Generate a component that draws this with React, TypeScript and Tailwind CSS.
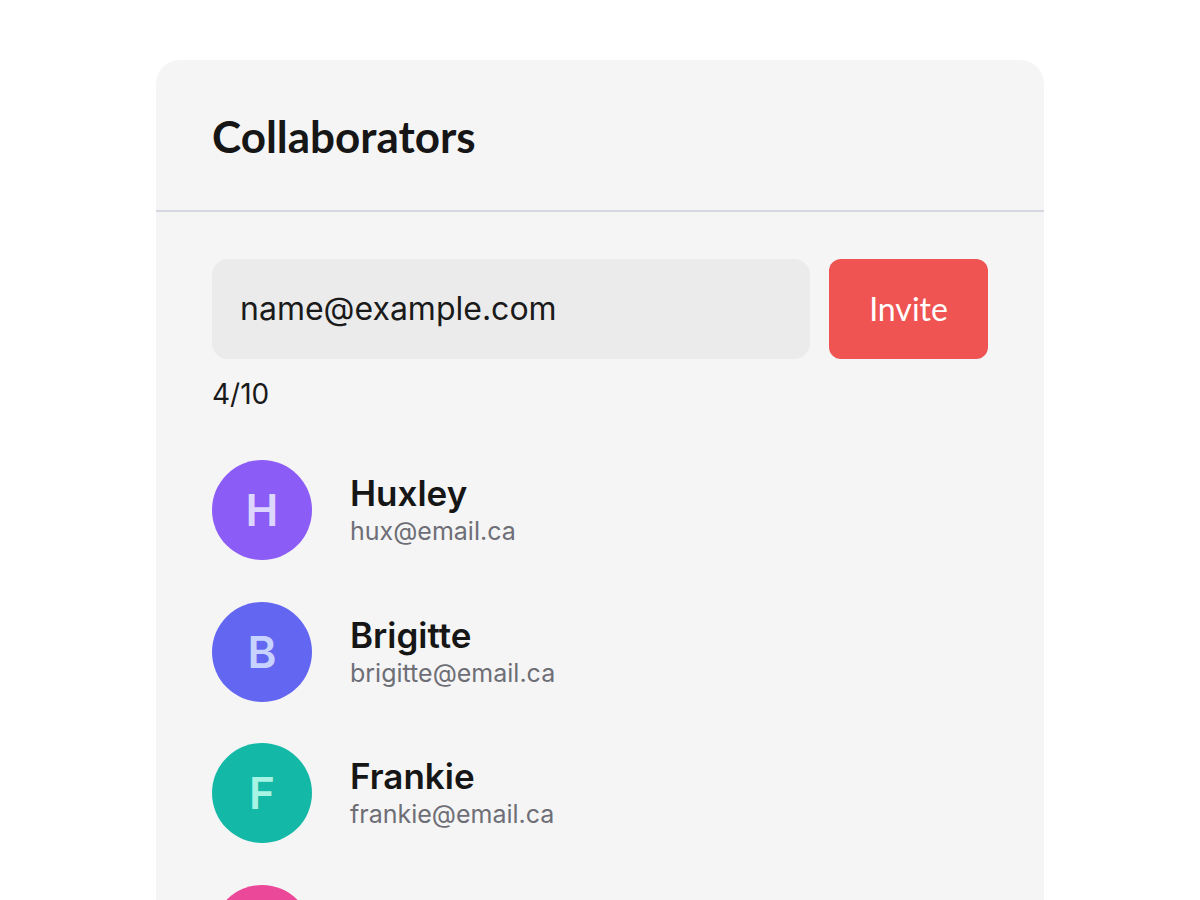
const people = [
  { name: "Huxley", email: "hux@email.ca", initial: "H", bg: "bg-[#8b5cf6]", fg: "text-[#ddd6fe]" },
  { name: "Brigitte", email: "brigitte@email.ca", initial: "B", bg: "bg-[#6366f1]", fg: "text-[#c7d2fe]" },
  { name: "Frankie", email: "frankie@email.ca", initial: "F", bg: "bg-[#14b8a6]", fg: "text-[#a7f3e4]" },
  { name: "Jordan", email: "jordan@email.ca", initial: "J", bg: "bg-[#ec4899]", fg: "text-[#fbcfe8]" },
];

export default function App() {
  return (
    <div className="h-[900px] overflow-hidden bg-white pt-[60px] font-['Inter',sans-serif]">
      <div className="mx-auto w-[888px] rounded-t-[24px] bg-[#f5f5f5]">
        <div className="border-b-2 border-[#d6d8e1] px-14 pb-[48px] pt-[50px]">
          <h1 className="font-['Lato',sans-serif] text-[44px] font-bold leading-[52px] text-[#161616]">
            Collaborators
          </h1>
        </div>

        <div className="px-14 pt-[47px]">
          <div className="flex gap-[19px]">
            <div className="flex h-[100px] flex-1 items-center rounded-2xl bg-[#ebebeb] px-7">
              <span className="text-[32px] text-[#1a1a1a]">name@example.com</span>
            </div>
            <button
              type="button"
              className="h-[100px] w-[159px] rounded-xl bg-[#ef5453] font-['Lato',sans-serif] text-[32px] text-white"
            >
              Invite
            </button>
          </div>
          <div className="mt-[19px] text-[28px] leading-[32px] text-[#1a1a1a]">4/10</div>

          <div className="mt-[50px] flex flex-col gap-[41.5px]">
            {people.map((p) => (
              <div key={p.name} className="flex items-center gap-[38px]">
                <div
                  className={`flex h-[100px] w-[100px] shrink-0 items-center justify-center rounded-full ${p.bg}`}
                >
                  <span className={`text-[44px] font-semibold ${p.fg}`}>{p.initial}</span>
                </div>
                <div className="flex flex-col">
                  <span className="text-[35px] font-semibold leading-[42px] text-[#161616]">{p.name}</span>
                  <span className="text-[25px] leading-[34px] text-[#6e6e76]">{p.email}</span>
                </div>
              </div>
            ))}
          </div>
        </div>
      </div>
    </div>
  );
}
